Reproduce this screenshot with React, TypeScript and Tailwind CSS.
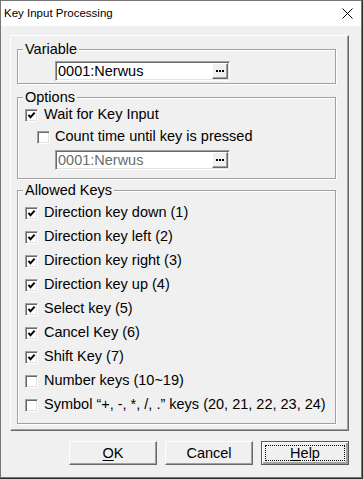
import {FC, ReactNode} from 'react';

const keys = [
  {label: 'Direction key down (1)', checked: true},
  {label: 'Direction key left (2)', checked: true},
  {label: 'Direction key right (3)', checked: true},
  {label: 'Direction key up (4)', checked: true},
  {label: 'Select key (5)', checked: true},
  {label: 'Cancel Key (6)', checked: true},
  {label: 'Shift Key (7)', checked: true},
  {label: 'Number keys (10~19)', checked: false},
  {label: 'Symbol \u201c+, -, *, /, .\u201d keys (20, 21, 22, 23, 24)', checked: false},
];

const Group: FC<{label: string; className: string; children: ReactNode}> = ({label, className, children}) => (
  <div className={`w-[319px] border border-[#a0a0a0] shadow-[1px_1px_0_#fff,inset_1px_1px_0_#fff] ${className}`}>
    <span className="-mt-[8px] ml-[5px] block w-fit bg-[#f0f0f0] px-[2px] leading-[14px]">{label}</span>
    {children}
  </div>
);

const CheckBox: FC<{checked: boolean}> = ({checked}) => (
  <span className="flex h-[13px] w-[13px] shrink-0 items-center justify-center border border-b-white border-l-[#a0a0a0] border-r-white border-t-[#a0a0a0] bg-white shadow-[inset_1px_1px_0_#696969,inset_-1px_-1px_0_#e3e3e3]">
    {checked && (
      <svg width="9" height="9" viewBox="0 0 9 9">
        <path d="M1.5 3.8 L3.5 6.3 L7.6 1.6" fill="none" stroke="#000" strokeWidth="2" />
      </svg>
    )}
  </span>
);

const Field: FC<{value: string; disabled?: boolean}> = ({value, disabled}) => (
  <div className="ml-[37px] flex h-[20px] w-[175px] items-stretch border border-b-white border-l-[#a0a0a0] border-r-white border-t-[#a0a0a0] bg-white shadow-[inset_1px_1px_0_#696969,inset_-1px_-1px_0_#e3e3e3]">
    <span className={`flex-1 pl-[2px] pt-[1px] leading-[16px] ${disabled ? 'text-[#6d6d6d]' : 'text-black'}`}>{value}</span>
    <span className="my-[1px] mr-[1px] flex w-[16px] items-center justify-center gap-[1px] border border-b-[#696969] border-l-white border-r-[#696969] border-t-white bg-[#f0f0f0] shadow-[inset_-1px_-1px_0_#a0a0a0]">
      <span className="h-[2px] w-[2px] bg-black" />
      <span className="h-[2px] w-[2px] bg-black" />
      <span className="h-[2px] w-[2px] bg-black" />
    </span>
  </div>
);

const Button: FC<{children: ReactNode; primary?: boolean}> = ({children, primary}) =>
  primary ? (
    <button className="h-[24px] w-[88px] border border-[#5a5a5a] bg-[#f0f0f0] p-[3px] shadow-[inset_1px_1px_0_#fff,inset_-2px_-2px_0_#a0a0a0]">
      <span className="flex h-full w-full items-center justify-center border border-dotted border-black leading-[14px]">{children}</span>
    </button>
  ) : (
    <button className="flex h-[24px] w-[88px] items-center justify-center border border-b-[#696969] border-l-white border-r-[#696969] border-t-white bg-[#f0f0f0] leading-[14px] shadow-[inset_-1px_-1px_0_#a0a0a0]">
      {children}
    </button>
  );

export default function App() {
  return (
    <div className="h-[479px] w-[363px] bg-[#25302a] font-['Liberation_Sans',Arial,sans-serif] text-[14.5px] text-black">
      <div className="flex h-[478px] w-[362px] flex-col border border-[#767676] bg-[#f0f0f0]">
        <div className="flex h-[25px] shrink-0 items-center justify-between bg-white pl-[3px] pr-[8px] text-[11.5px]">
          <span>Key Input Processing</span>
          <svg width="11" height="11" viewBox="0 0 11 11">
            <path d="M0.5 0.5 L10.5 10.5 M10.5 0.5 L0.5 10.5" stroke="#000" strokeWidth="1" />
          </svg>
        </div>

        <div className="pl-[9px] pt-[9px]">
          <div className="h-[396px] w-[339px] border border-b-[#696969] border-l-white border-r-[#696969] border-t-white pl-[6px] shadow-[inset_-1px_-1px_0_#a0a0a0]">
            <Group label="Variable" className="mt-[13px] h-[35px]">
              <div className="mt-[5px]">
                <Field value="0001:Nerwus" />
              </div>
            </Group>

            <Group label="Options" className="mt-[13px] h-[82px]">
              <label className="ml-[7px] mt-[1px] flex h-[20px] items-center gap-[6px]">
                <CheckBox checked />
                <span>Wait for Key Input</span>
              </label>
              <label className="ml-[19px] mt-[2px] flex h-[20px] items-center gap-[5px]">
                <CheckBox checked={false} />
                <span>Count time until key is pressed</span>
              </label>
              <div className="mt-[3px]">
                <Field value="0001:Nerwus" disabled />
              </div>
            </Group>

            <Group label="Allowed Keys" className="mt-[11px] h-[234px]">
              <div className="mt-[4px] flex flex-col">
                {keys.map(({label, checked}) => (
                  <label className="ml-[7px] flex h-[24px] items-center gap-[6px]" key={label}>
                    <CheckBox checked={checked} />
                    <span>{label}</span>
                  </label>
                ))}
              </div>
            </Group>
          </div>

          <div className="mt-[10px] flex w-[339px] justify-end gap-[8px]">
            <Button>
              <u className="underline-offset-2">O</u>K
            </Button>
            <Button>Cancel</Button>
            <Button primary>
              <u className="underline-offset-2">H</u>elp
            </Button>
          </div>
        </div>
      </div>
    </div>
  );
}
